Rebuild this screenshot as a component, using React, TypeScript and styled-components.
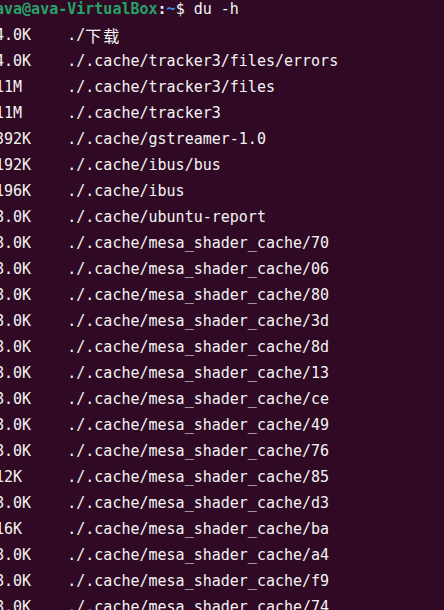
import React from "react";
import styled, { createGlobalStyle } from "styled-components";

const Global = createGlobalStyle`
  html, body {
    margin: 0;
    padding: 0;
    background: #300a24;
    overflow: hidden;
  }
  #root {
    width: 444px;
    height: 610px;
    overflow: hidden;
  }
`;

const Terminal = styled.div`
  width: 444px;
  height: 610px;
  background: #300a24;
  overflow: hidden;
  font-family: "DejaVu Sans Mono", "Noto Sans CJK SC", monospace;
  font-size: 15px;
  color: #f4f4f4;
`;

const Screen = styled.div`
  margin: -4px 0 0 -5px;
  display: flex;
  flex-direction: column;
`;

const Line = styled.div`
  height: 26px;
  line-height: 26px;
  white-space: pre;
  display: flex;
`;

const User = styled.span`
  color: #26a269;
  font-weight: bold;
`;

const Path = styled.span`
  color: #3d8be0;
  font-weight: bold;
`;

const Plain = styled.span<{ $bold?: boolean }>`
  font-weight: ${(p) => (p.$bold ? "bold" : "normal")};
`;

const Size = styled.span`
  width: 8ch;
  flex: none;
`;

const Wide = styled.span`
  font-family: "Noto Sans CJK SC", sans-serif;
  letter-spacing: 2px;
  font-size: 16px;
`;

const rows: [string, string][] = [
  ["4.0K", "./.cache/tracker3/files/errors"],
  ["11M", "./.cache/tracker3/files"],
  ["11M", "./.cache/tracker3"],
  ["392K", "./.cache/gstreamer-1.0"],
  ["192K", "./.cache/ibus/bus"],
  ["196K", "./.cache/ibus"],
  ["8.0K", "./.cache/ubuntu-report"],
  ["8.0K", "./.cache/mesa_shader_cache/70"],
  ["8.0K", "./.cache/mesa_shader_cache/06"],
  ["8.0K", "./.cache/mesa_shader_cache/80"],
  ["8.0K", "./.cache/mesa_shader_cache/3d"],
  ["8.0K", "./.cache/mesa_shader_cache/8d"],
  ["8.0K", "./.cache/mesa_shader_cache/13"],
  ["8.0K", "./.cache/mesa_shader_cache/ce"],
  ["8.0K", "./.cache/mesa_shader_cache/49"],
  ["8.0K", "./.cache/mesa_shader_cache/76"],
  ["12K", "./.cache/mesa_shader_cache/85"],
  ["8.0K", "./.cache/mesa_shader_cache/d3"],
  ["16K", "./.cache/mesa_shader_cache/ba"],
  ["8.0K", "./.cache/mesa_shader_cache/a4"],
  ["8.0K", "./.cache/mesa_shader_cache/f9"],
  ["8.0K", "./.cache/mesa_shader_cache/74"],
];

export default function App() {
  return (
    <>
      <Global />
      <Terminal>
        <Screen>
          <Line>
            <User>ava@ava-VirtualBox</User>
            <Plain $bold>:</Plain>
            <Path>~</Path>
            <Plain>$ du -h</Plain>
          </Line>
          <Line>
            <Size>4.0K</Size>
            <span>./</span>
            <Wide>下载</Wide>
          </Line>
          {rows.map(([s, p], i) => (
            <Line key={i}>
              <Size>{s}</Size>
              <span>{p}</span>
            </Line>
          ))}
        </Screen>
      </Terminal>
    </>
  );
}
